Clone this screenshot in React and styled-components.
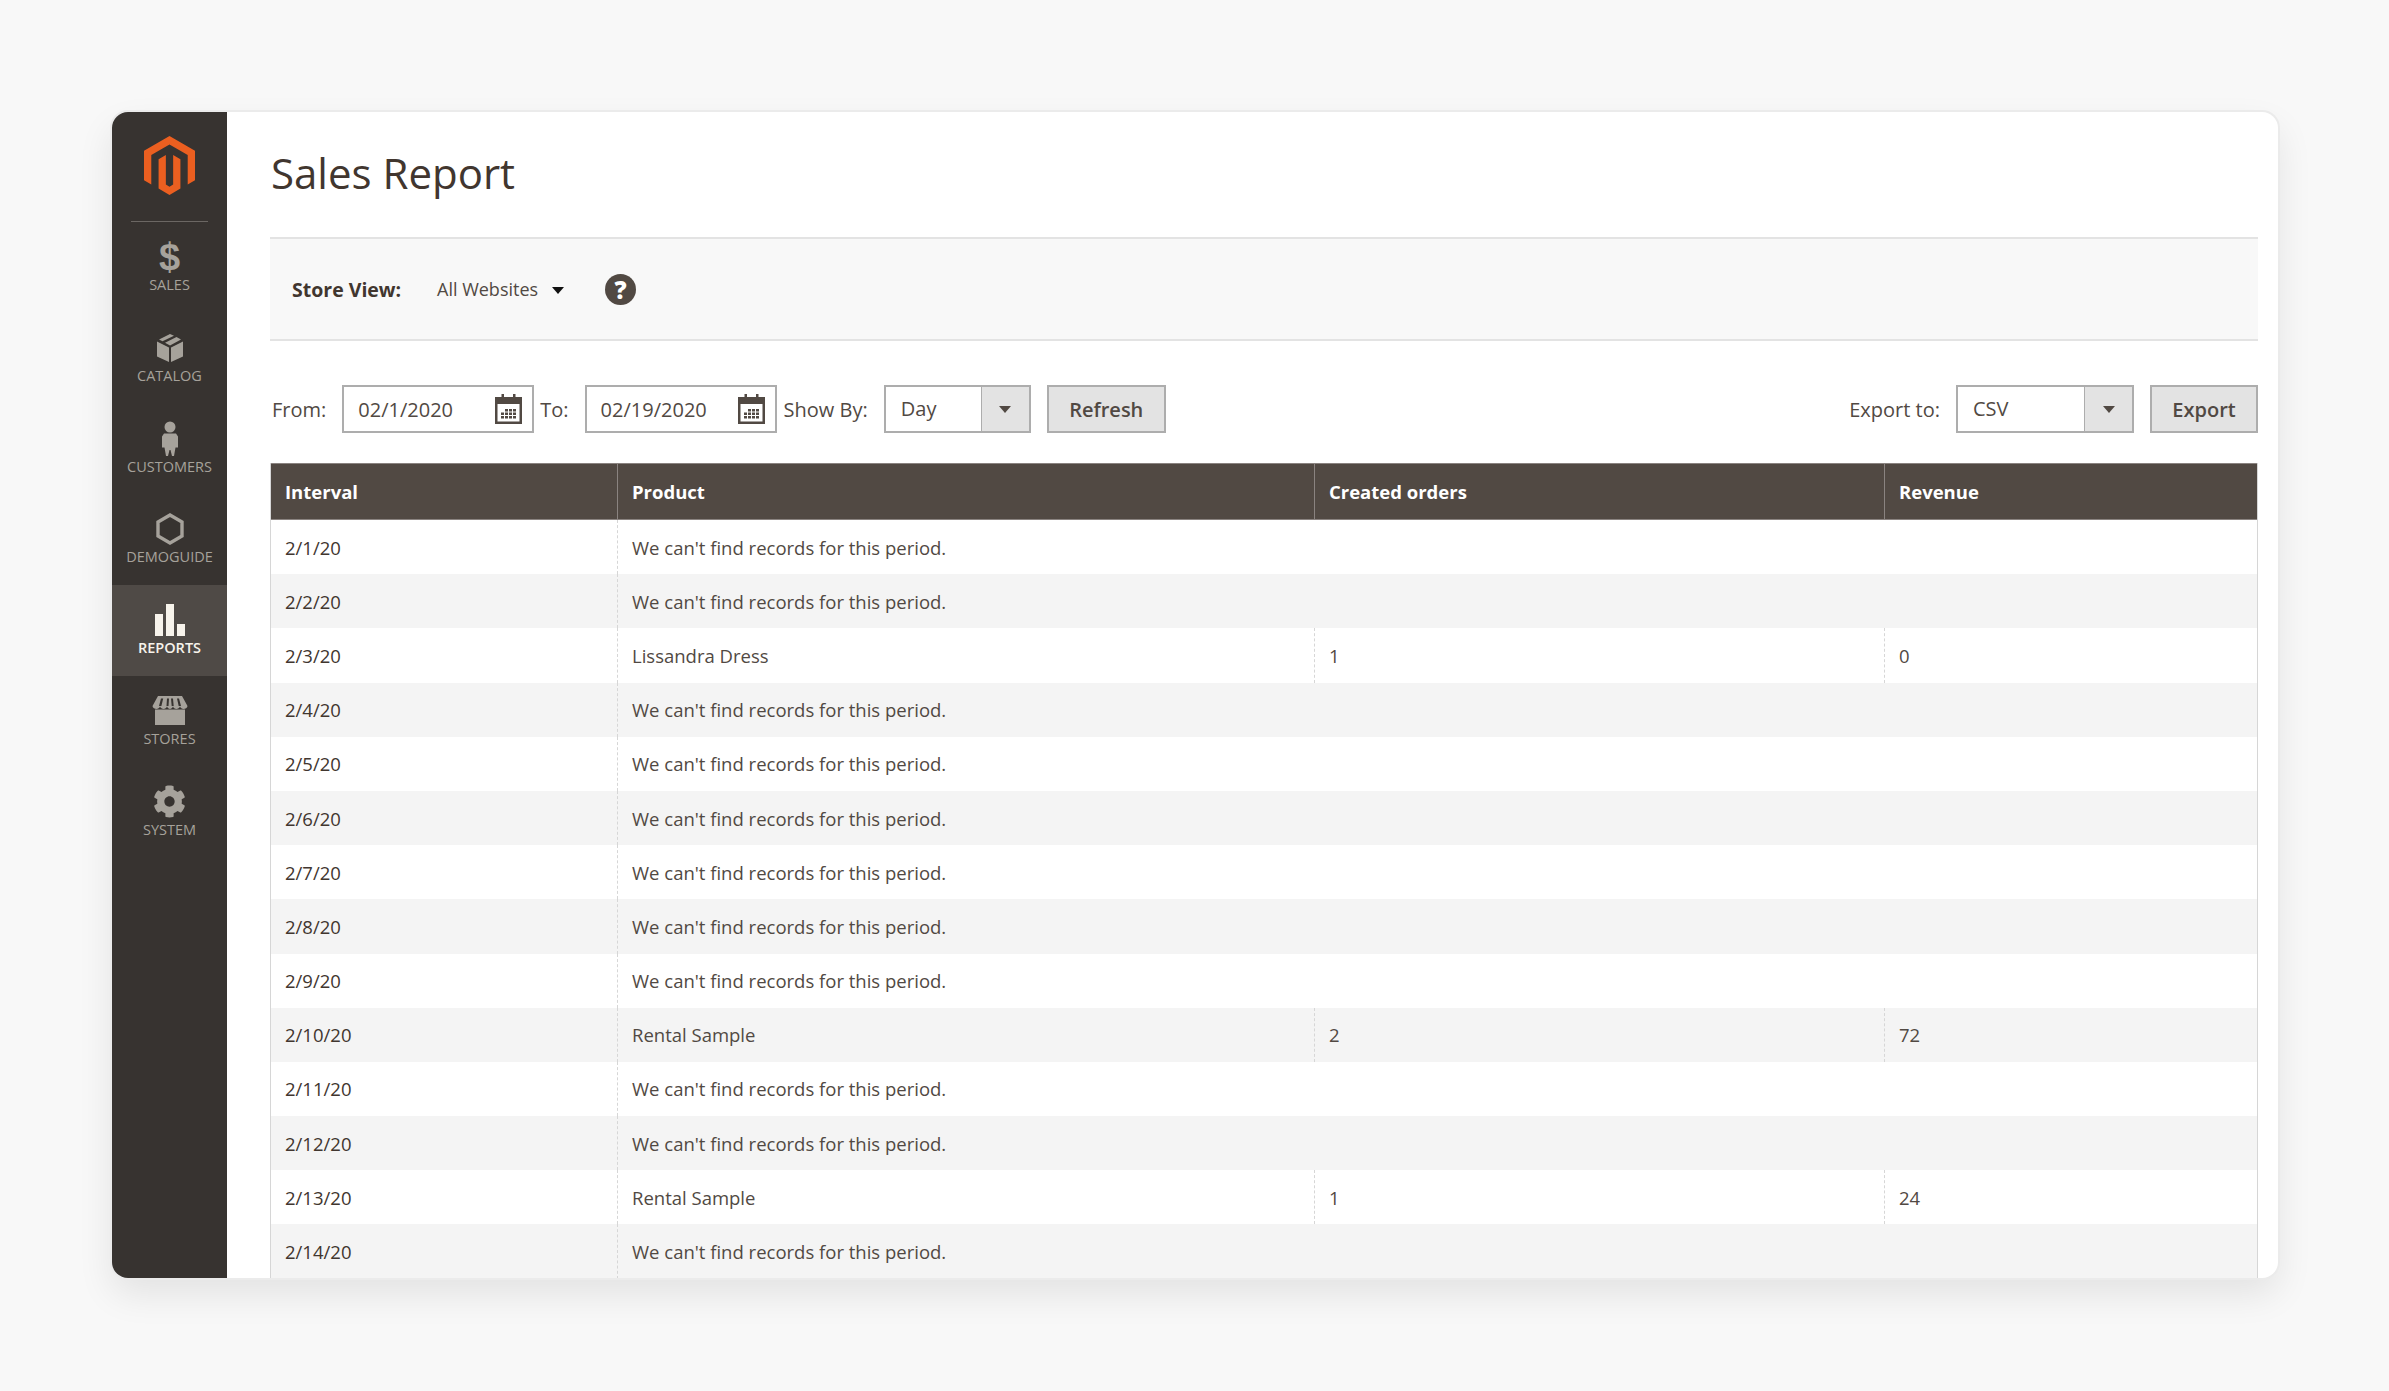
import React from 'react';
import styled, { createGlobalStyle } from 'styled-components';
import { FaCog } from 'react-icons/fa';

const Global = createGlobalStyle`
  html, body { margin: 0; padding: 0; background: #f8f8f8; }
  body { font-family: "Open Sans", "Liberation Sans", sans-serif; color: #41362f; }
  * { box-sizing: border-box; }
`;

const Page = styled.div`
  width: 2389px;
  height: 1391px;
  padding: 112px 0 0 112px;
  overflow: hidden;
`;
const Frame = styled.div`
  width: 2166px;
  height: 1166px;
  display: flex;
  background: #fff;
  border-radius: 16px;
  overflow: hidden;
  box-shadow: 0 0 0 2px #ebebeb, 0 16px 36px rgba(0, 0, 0, 0.09);
`;
const Sidebar = styled.nav`
  width: 115px;
  flex: none;
  background: #373330;
  display: flex;
  flex-direction: column;
`;
const LogoBlock = styled.div`
  height: 110px;
  margin: 0 19px;
  padding-top: 24px;
  display: flex;
  justify-content: center;
  align-items: flex-start;
  border-bottom: 1px solid #6b6763;
`;
const NavItem = styled.a`
  height: 90.8px;
  padding-top: ${p => p.$pt || 17}px;
  display: flex;
  flex-direction: column;
  align-items: center;
  background: ${p => (p.$active ? '#4f4a46' : 'transparent')};
  color: ${p => (p.$active ? '#f7f3eb' : '#a6a29b')};
  font-size: 14.5px;
  line-height: 20px;
  font-weight: ${p => (p.$active ? 600 : 400)};
  text-transform: uppercase;
`;
const NavIcon = styled.span`
  height: 36px;
  display: flex;
  align-items: center;
  justify-content: center;
  font-family: "Liberation Sans", sans-serif;
  font-weight: 700;
  font-size: 38px;
  line-height: 36px;
`;
const Main = styled.main`
  flex: 1;
  min-width: 0;
  padding: 0 20px 0 43px;
`;
const Title = styled.h1`
  height: 125px;
  margin: 0;
  padding: 33px 0 0 1px;
  font-size: 42px;
  line-height: 56px;
  font-weight: 400;
  color: #41362f;
`;
const ScopeBar = styled.div`
  height: 104px;
  display: flex;
  align-items: center;
  padding-left: 22px;
  background: #f8f8f8;
  border-top: 2px solid #e3e3e3;
  border-bottom: 2px solid #e3e3e3;
  font-size: 19.5px;
`;
const ScopeLabel = styled.strong`
  font-weight: 700;
  width: 145px;
  color: #41362f;
`;
const ScopeValue = styled.span`
  font-size: 18px;
  color: #514943;
`;
const ScopeArrow = styled.span`
  width: 0;
  height: 0;
  margin: 2px 0 0 14px;
  border-left: 6px solid transparent;
  border-right: 6px solid transparent;
  border-top: 7px solid #111;
`;
const Help = styled.span`
  width: 31px;
  height: 31px;
  margin-left: 41px;
  border-radius: 50%;
  background: #514943;
  color: #fff;
  font-weight: 800;
  font-size: 24px;
  line-height: 31px;
  text-align: center;
`;
const Toolbar = styled.div`
  height: 48px;
  margin: 44px 0 30px;
  display: flex;
  align-items: center;
  font-size: 20px;
  color: #514943;
`;
const Label = styled.label`
  margin: ${p => p.$m || '0'};
  white-space: nowrap;
`;
const DateField = styled.div`
  width: ${p => p.$w || 192}px;
  height: 48px;
  display: flex;
  align-items: center;
  justify-content: space-between;
  padding: 0 10px 0 14px;
  border: 2px solid #adadad;
  background: #fff;
  color: #514943;
`;
const Select = styled.div`
  width: ${p => p.$w}px;
  height: 48px;
  display: flex;
  border: 2px solid #adadad;
  background: #fff;
`;
const SelectValue = styled.span`
  flex: 1;
  padding-left: 15px;
  line-height: 44px;
  color: #514943;
`;
const SelectArrow = styled.span`
  width: ${p => p.$w || 48}px;
  flex: none;
  display: flex;
  align-items: center;
  justify-content: center;
  background: #e3e3e3;
  border-left: 1px solid #adadad;
  &::after {
    content: '';
    border-left: 6px solid transparent;
    border-right: 6px solid transparent;
    border-top: 7px solid #514943;
  }
`;
const Button = styled.button`
  width: ${p => p.$w}px;
  height: 48px;
  margin-left: ${p => p.$ml || 16}px;
  padding: 0;
  border: 2px solid #adadad;
  background: #e3e3e3;
  color: #514943;
  font: 600 20px "Open Sans", "Liberation Sans", sans-serif;
`;
const Spacer = styled.div`
  flex: 1;
`;
const Table = styled.table`
  width: 1988px;
  table-layout: fixed;
  border-collapse: separate;
  border-spacing: 0;
  border-left: 1px solid #d6d6d6;
  border-right: 1px solid #d6d6d6;
  margin-left: 0;
  font-size: 18.5px;
  color: #41362f;
`;
const Th = styled.th`
  height: 57px;
  padding: 0 14px;
  text-align: left;
  background: #514943;
  color: #fff;
  font-weight: 700;
  font-size: 18.5px;
  border-top: 1px solid #8a8380;
  border-bottom: 1px solid #8a8380;
  border-left: ${p => (p.$first ? '0' : '1px solid #8a8380')};
`;
const Tr = styled.tr`
  background: ${p => (p.$alt ? '#f4f4f4' : '#fff')};
`;
const Td = styled.td`
  height: 54.2px;
  padding: 0 14px;
  border-left: ${p => (p.$first ? '0' : '1px dashed #d6d6d6')};
  color: ${p => (p.$first ? '#41362f' : '#514943')};
`;

const Logo = () => (
  <svg width="51" height="59" viewBox="1.6 0 20.8 24">
    <path fill="#eb5f20" d="M12 24l-4.455-2.572v-12l2.97-1.715v12.001l1.485.902 1.485-.902V7.713l2.97 1.715v12L12 24zM22.391 6v12l-2.969 1.714V7.713L12 3.43 4.574 7.713v12.001L1.609 18V6L12 0l10.391 6z" />
  </svg>
);
const BoxIcon = () => (
  <svg width="28" height="30" viewBox="0 0 28 30" fill="currentColor">
    <path d="M1 8.5 13 14.5V29L1 23.5zM27 8.5 15 14.5V29L27 23.5z" />
    <path d="M14 1 18 2.8 6.5 8.3 3 6.6zM20.5 4 25 6.4 14 12.6 9 9.8z" />
  </svg>
);
const PersonIcon = () => (
  <svg width="18" height="36" viewBox="0 0 18 36" fill="currentColor">
    <circle cx="9" cy="6" r="5.5" />
    <path d="M3 12.5h12l2 3v11h-2.5L13 35h-2l-1.5-6h-1L7 35H5l-1.5-8.500H1v-11z" />
  </svg>
);
const HexIcon = () => (
  <svg width="28" height="32" viewBox="0 0 28 32" fill="none" stroke="currentColor" strokeWidth="3.4">
    <path d="M14 2 26 9v14l-12 7-12-7V9z" />
  </svg>
);
const BarsIcon = () => (
  <svg width="30" height="32" viewBox="0 0 30 32" fill="currentColor">
    <rect x="0" y="10" width="8" height="22" />
    <rect x="11" y="0" width="8" height="32" />
    <rect x="22" y="20" width="8" height="12" />
  </svg>
);
const StoreIcon = () => (
  <svg width="36" height="30" viewBox="0 0 36 30" fill="currentColor">
    <path d="M3 13.5h30V29H3z" />
    <path d="M6 0h24l5.500 10c0 2-2.400 3-4 3s-3-1-3.500-2.500C27.500 12 26 13 24.400 13s-3-1-3.400-2.500c-.5 1.500-1.900 2.500-3 2.500s-2.500-1-3-2.500C14.500 12 13 13 11.600 13S8.500 12 8 10.500C7.500 12 6 13 4.500 13s-4-1-4-3z" />
    <path fill="#373330" d="M9 2.500h2.200L9.400 10H7zM15 2.500h2L16.500 10h-2zM19 2.500h2l.7 7.500h-2zM25 2.500h2l2 7.500h-2.300z" />
  </svg>
);
const CalendarIcon = () => (
  <svg width="27" height="30" viewBox="0 0 27 30">
    <path fill="#514943" d="M0 3h27v27H0z" />
    <path fill="#fff" d="M2.500 10h22v17.500h-22z" />
    <path fill="#514943" d="M6.500 0h2.500v7H6.500zM18 0h2.500v7H18z" />
    <path fill="#514943" d="M6 18.500h3v2.600H6zM10 15h3v2.600h-3zM10 18.500h3v2.600h-3zM10 22h3v2.600h-3zM14 15h3v2.600h-3zM14 18.500h3v2.600h-3zM14 22h3v2.600h-3zM18 15h3v2.600h-3zM18 18.500h3v2.600h-3zM18 22h3v2.600h-3zM6 22h3v2.600H6z" />
  </svg>
);

const NAV = [
  { label: 'Sales', icon: '$' },
  { label: 'Catalog', icon: <BoxIcon /> },
  { label: 'Customers', icon: <PersonIcon /> },
  { label: 'Demoguide', icon: <HexIcon /> },
  { label: 'Reports', icon: <BarsIcon />, active: true },
  { label: 'Stores', icon: <StoreIcon /> },
  { label: 'System', icon: <FaCog size={33} /> },
];

const NONE = "We can't find records for this period.";
const ROWS = [
  ['2/1/20'], ['2/2/20'],
  ['2/3/20', 'Lissandra Dress', '1', '0'],
  ['2/4/20'], ['2/5/20'], ['2/6/20'], ['2/7/20'], ['2/8/20'], ['2/9/20'],
  ['2/10/20', 'Rental Sample', '2', '72'],
  ['2/11/20'], ['2/12/20'],
  ['2/13/20', 'Rental Sample', '1', '24'],
  ['2/14/20'],
];

export default function App() {
  return (
    <Page>
      <Global />
      <Frame>
        <Sidebar>
          <LogoBlock><Logo /></LogoBlock>
          {NAV.map(n => (
            <NavItem key={n.label} $active={n.active}>
              <NavIcon>{n.icon}</NavIcon>
              {n.label}
            </NavItem>
          ))}
        </Sidebar>
        <Main>
          <Title>Sales Report</Title>
          <ScopeBar>
            <ScopeLabel>Store View:</ScopeLabel>
            <ScopeValue>All Websites</ScopeValue>
            <ScopeArrow />
            <Help>?</Help>
          </ScopeBar>
          <Toolbar>
            <Label $m="0 16px 0 2px">From:</Label>
            <DateField>02/1/2020<CalendarIcon /></DateField>
            <Label $m="0 16px 0 6px">To:</Label>
            <DateField>02/19/2020<CalendarIcon /></DateField>
            <Label $m="0 16px 0 7px">Show By:</Label>
            <Select $w={147}>
              <SelectValue>Day</SelectValue>
              <SelectArrow />
            </Select>
            <Button $w={119}>Refresh</Button>
            <Spacer />
            <Label $m="0 16px 0 0">Export to:</Label>
            <Select $w={178}>
              <SelectValue>CSV</SelectValue>
              <SelectArrow />
            </Select>
            <Button $w={108}>Export</Button>
          </Toolbar>
          <Table>
            <colgroup>
              <col style={{ width: 346 }} />
              <col style={{ width: 697 }} />
              <col style={{ width: 570 }} />
              <col />
            </colgroup>
            <thead>
              <tr>
                <Th $first>Interval</Th>
                <Th>Product</Th>
                <Th>Created orders</Th>
                <Th>Revenue</Th>
              </tr>
            </thead>
            <tbody>
              {ROWS.map(([date, product, orders, revenue], i) => (
                <Tr key={date} $alt={i % 2 === 1}>
                  <Td $first>{date}</Td>
                  {product ? (
                    <>
                      <Td>{product}</Td>
                      <Td>{orders}</Td>
                      <Td>{revenue}</Td>
                    </>
                  ) : (
                    <Td colSpan={3}>{NONE}</Td>
                  )}
                </Tr>
              ))}
            </tbody>
          </Table>
        </Main>
      </Frame>
    </Page>
  );
}
